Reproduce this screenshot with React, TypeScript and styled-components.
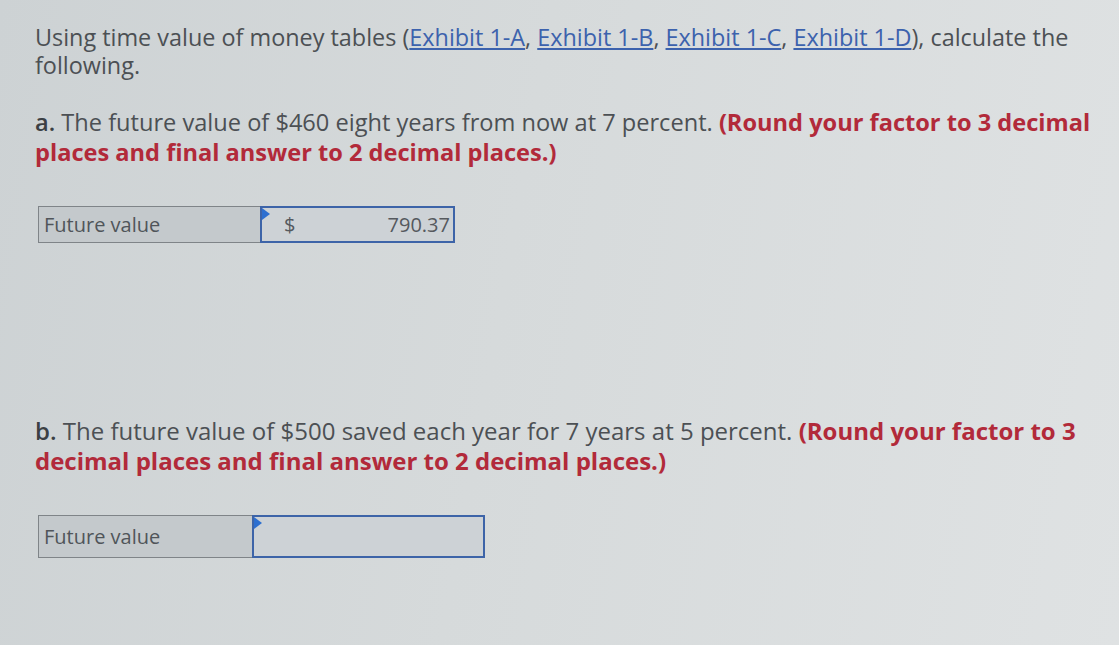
import styled, { createGlobalStyle } from 'styled-components';

const Global = createGlobalStyle`
    html, body {
        margin: 0;
        padding: 0;
        width: 1119px;
        height: 645px;
        overflow: hidden;
    }
    body {
        font-family: "Open Sans", Lato, sans-serif;
        background: linear-gradient(100deg, #cdd2d4 0%, #d6dadb 45%, #dfe2e3 100%);
    }
`

const Page = styled.div`
    padding: 23px 0 0 35px;
    width: 1084px;
    color: #4c5054;
`

const Para = styled.p<{ $top?: number; $lh?: number; $size?: number }>`
    margin: ${p => p.$top ?? 0}px 0 0 0;
    font-size: ${p => p.$size ?? 23.4}px;
    line-height: ${p => p.$lh ?? 28}px;
    white-space: nowrap;
`

const Link = styled.a`
    color: #3c62ad;
    text-decoration: underline;
    text-underline-offset: 2px;
`

const Label = styled.b`
    color: #3b3f44;
    font-weight: 600;
`

const Hint = styled.b`
    color: #b22a3a;
    font-weight: 700;
`

const Answer = styled.div<{ $top: number; $label: number; $input: number; $h: number }>`
    display: grid;
    grid-template-columns: ${p => p.$label}px ${p => p.$input}px;
    height: ${p => p.$h}px;
    margin: ${p => p.$top}px 0 0 3px;
`

const LabelCell = styled.div`
    display: flex;
    align-items: center;
    padding-left: 5px;
    background: #c4c9cc;
    border: 1px solid #7f8488;
    border-right: none;
    font-size: 20px;
    color: #50555a;
`

const InputCell = styled.div`
    position: relative;
    display: flex;
    align-items: center;
    justify-content: space-between;
    padding: 0 3px 0 22px;
    background: #cdd2d6;
    border: 2px solid #3d64a8;
    font-size: 20px;
    color: #55595e;
`

const Flag = styled.span`
    position: absolute;
    left: 0;
    top: 0;
    width: 0;
    height: 0;
    border-top: 6px solid transparent;
    border-bottom: 6px solid transparent;
    border-left: 8px solid #2d6fd0;
`

export default function App() {
    return (
        <>
            <Global />
            <Page>
                <Para>
                    Using time value of money tables (<Link>Exhibit 1-A</Link>, <Link>Exhibit 1-B</Link>, <Link>Exhibit 1-C</Link>, <Link>Exhibit 1-D</Link>), calculate the<br />following.
                </Para>
                <Para $top={28} $lh={30} $size={23.6}>
                    <Label>a.</Label> The future value of $460 eight years from now at 7 percent. <Hint>(Round your factor to 3 decimal<br />places and final answer to 2 decimal places.)</Hint>
                </Para>
                <Answer $top={39} $label={222} $input={195} $h={37}>
                    <LabelCell>Future value</LabelCell>
                    <InputCell>
                        <Flag />
                        <span>$</span>
                        <span>790.37</span>
                    </InputCell>
                </Answer>
                <Para $top={173} $lh={30} $size={24}>
                    <Label>b.</Label> The future value of $500 saved each year for 7 years at 5 percent. <Hint>(Round your factor to 3<br />decimal places and final answer to 2 decimal places.)</Hint>
                </Para>
                <Answer $top={39} $label={214} $input={233} $h={43}>
                    <LabelCell>Future value</LabelCell>
                    <InputCell>
                        <Flag />
                    </InputCell>
                </Answer>
            </Page>
        </>
    )
}
